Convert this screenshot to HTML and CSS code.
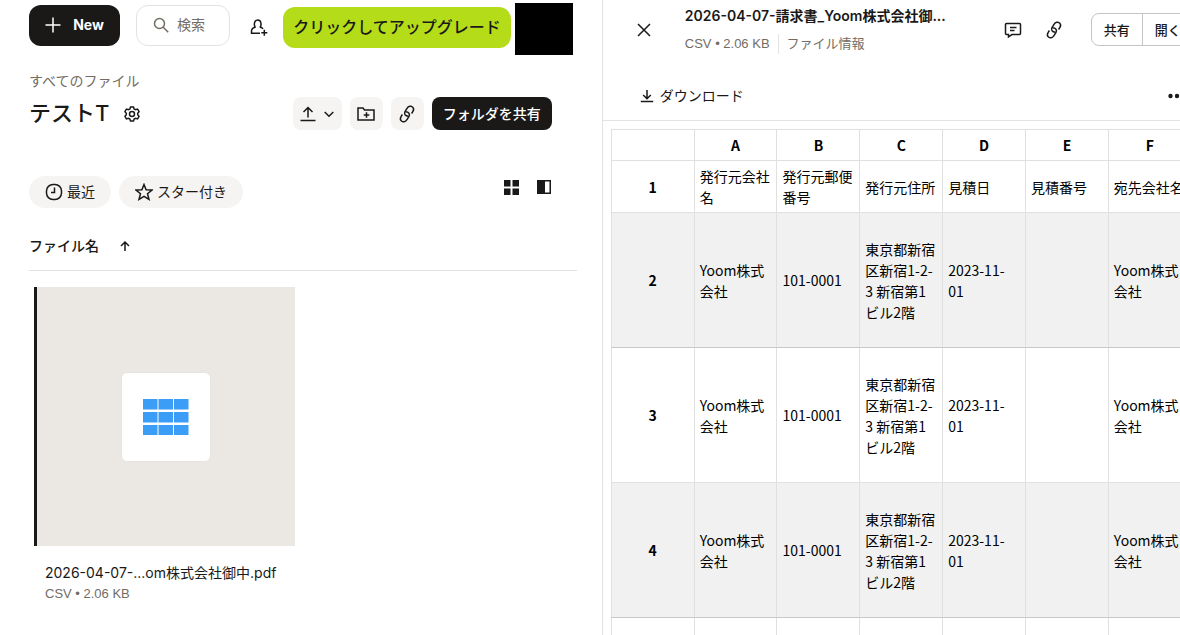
FILE: index.html
```html
<!DOCTYPE html>
<html lang="ja">
<head>
    <meta charset="UTF-8">
    <meta name="viewport" content="width=device-width, initial-scale=1.0">
    <title>テストT</title>
    <link rel="stylesheet" href="styles.css">
</head>
<body>
    <svg class="defs" aria-hidden="true">
        <symbol id="icon-link" viewBox="0 0 18 18">
            <path d="M10.200 11.200C7.500 11 5.600 9.300 7 6.600L9 3.400C10.500 1 13 .8 14.500 2 16 3.200 15.800 5 14.800 6.600L13.600 8.500M7.800 6.800C10.500 7 12.400 8.700 11 11.400L9 14.600C7.500 17 5 17.200 3.500 16 2 14.800 2.200 13 3.200 11.400L4.400 9.500"/>
        </symbol>
    </svg>

    <main class="browser">
        <div class="topbar">
            <button type="button" class="btn-new">
                <svg class="icon" width="16" height="16" viewBox="0 0 16 16"><path d="M8 .5v15M.5 8h15"/></svg>
                New
            </button>
            <label class="search">
                <svg class="icon" width="16" height="16" viewBox="0 0 16 16"><circle cx="6.500" cy="6.500" r="5"/><path d="M10.200 10.200l5 5"/></svg>
                <input type="text" placeholder="検索" aria-label="検索">
            </label>
            <button type="button" class="btn-plain btn-invite" aria-label="招待">
                <svg class="icon" width="18" height="18" viewBox="0 0 18 18"><path d="M10 15.300H1.500v-1.800c0-2.200 1.300-3.600 3.400-4.200M5.500 9.700C4.600 8.700 4.200 6.500 4.500 4.800 4.900 2.800 6.200 2 7.700 2s2.800.8 3.200 2.800c.3 1.700-.1 3.900-1 4.900M10.500 9.300c1.100.3 2 .8 2.600 1.500M14.300 11.800v6M11.300 14.800h6"/></svg>
            </button>
            <button type="button" class="btn-upgrade">クリックしてアップグレード</button>
            <div class="avatar"></div>
        </div>

        <a href="#" class="breadcrumb">すべてのファイル</a>

        <div class="title-row">
            <h1>テストT</h1>
            <button type="button" class="btn-plain" aria-label="設定">
                <svg class="icon" width="16" height="16" viewBox="0 0 16 16"><path d="M6.500 1h3l.6 1.900 1.500.8 2-.6 1.500 2.600L13.700 7.200v1.600l1.400 1.500-1.500 2.600-2-.6-1.500.8-.6 1.900h-3l-.6-1.900-1.500-.8-2 .6L.9 10.300l1.400-1.500V7.200L.9 5.700l1.500-2.600 2 .6 1.500-.8z"/><circle cx="8" cy="8" r="2.500"/></svg>
            </button>
            <div class="actions">
                <button type="button" class="btn-soft btn-upload" aria-label="アップロード">
                    <svg class="icon" width="16" height="16" viewBox="0 0 16 16"><path d="M8 11.500V1.500M3.500 6L8 1.500 12.500 6M.5 14.500h15"/></svg>
                    <svg class="icon" width="10" height="10" viewBox="0 0 10 10"><path d="M.7 3L5 7.200 9.300 3"/></svg>
                </button>
                <button type="button" class="btn-soft" aria-label="新しいフォルダ">
                    <svg class="icon" width="18" height="18" viewBox="0 0 18 18"><path d="M1 15V3h5l1.500 2H17v10zM9.500 7.200v5.600M6.700 10h5.600"/></svg>
                </button>
                <button type="button" class="btn-soft" aria-label="リンクをコピー">
                    <svg class="icon" width="18" height="18"><use href="#icon-link"/></svg>
                </button>
                <button type="button" class="btn-share">フォルダを共有</button>
            </div>
        </div>

        <div class="filters">
            <button type="button" class="chip">
                <svg class="icon" width="18" height="18" viewBox="0 0 18 18"><rect x="1.500" y="1.500" width="15" height="15" rx="6.500"/><path d="M9.500 4.500v5H6"/></svg>
                最近
            </button>
            <button type="button" class="chip">
                <svg class="icon" width="18" height="18" viewBox="0 0 18 18"><path d="M9 1.500l2.100 5.200 5.900.3-4.500 3.700 1.500 5.700L9 13.300l-5 3.100 1.500-5.700L1 7l5.900-.3z"/></svg>
                スター付き
            </button>
            <div class="views">
                <button type="button" class="btn-plain" aria-label="グリッド表示">
                    <svg class="solid" width="15" height="15" viewBox="0 0 15 15"><path d="M0 0h6.500v6.500H0zM8.500 0H15v6.500H8.500zM0 8.500h6.500V15H0zM8.500 8.500H15V15H8.500z"/></svg>
                </button>
                <button type="button" class="btn-plain" aria-label="プレビュー表示">
                    <svg class="solid" width="14" height="14" viewBox="0 0 14 14"><path fill-rule="evenodd" d="M0 0h14v14H0zM8 1.500v11h4.500v-11z"/></svg>
                </button>
            </div>
        </div>

        <button type="button" class="sort">
            ファイル名
            <svg class="icon" width="12" height="12" viewBox="0 0 12 12"><path d="M6 11V2M2 6l4-4 4 4"/></svg>
        </button>

        <div class="files">
            <article class="file">
                <div class="thumb">
                    <div class="thumb-card">
                        <svg class="sheet-icon" width="46" height="36" viewBox="0 0 46 36"><path d="M0 0h14.500v10.500H0zM15.500 0H30v10.500H15.500zM31 0h14.500v10.500H31zM0 13h14.500v10.500H0zM15.500 13H30v10.500H15.500zM31 13h14.500v10.500H31zM0 26h14.500v10H0zM15.500 26H30v10H15.500zM31 26h14.500v10H31z"/></svg>
                    </div>
                </div>
                <p class="file-name">2026-04-07-...om株式会社御中.pdf</p>
                <p class="file-meta">CSV • 2.06 KB</p>
            </article>
        </div>
    </main>

    <section class="preview">
        <header class="preview-header">
            <button type="button" class="btn-plain btn-close" aria-label="閉じる">
                <svg class="icon" width="14" height="14" viewBox="0 0 14 14"><path d="M1 1l12 12M13 1L1 13"/></svg>
            </button>
            <div class="preview-title">
                <h2>2026-04-07-請求書_Yoom株式会社御...</h2>
                <p class="preview-meta"><span>CSV • 2.06 KB</span><a href="#">ファイル情報</a></p>
            </div>
            <button type="button" class="btn-plain" aria-label="コメント">
                <svg class="icon" width="18" height="18" viewBox="0 0 18 18"><path d="M2.500 2.500h13a1 1 0 0 1 1 1v9a1 1 0 0 1-1 1H8L4.500 15.800v-2.300h-2a1 1 0 0 1-1-1v-9a1 1 0 0 1 1-1zM6 6.500h6.500M6 9.500h4.500"/></svg>
            </button>
            <button type="button" class="btn-plain btn-link" aria-label="リンクをコピー">
                <svg class="icon" width="18" height="18"><use href="#icon-link"/></svg>
            </button>
            <div class="btn-group">
                <button type="button">共有</button>
                <button type="button">開く</button>
            </div>
        </header>

        <div class="toolbar">
            <button type="button" class="btn-plain btn-download">
                <svg class="icon" width="14" height="14" viewBox="0 0 14 14"><path d="M7 1v8.500M3.200 6L7 9.700 10.800 6M.8 12.500h12.400"/></svg>
                ダウンロード
            </button>
            <button type="button" class="btn-plain btn-more" aria-label="その他">
                <svg class="solid" width="18" height="6" viewBox="0 0 18 6"><circle cx="2.500" cy="3" r="2.200"/><circle cx="9" cy="3" r="2.200"/><circle cx="15.500" cy="3" r="2.200"/></svg>
            </button>
        </div>

        <div class="sheet">
            <table>
                <thead>
                    <tr><th></th><th>A</th><th>B</th><th>C</th><th>D</th><th>E</th><th>F</th></tr>
                </thead>
                <tbody>
                    <tr class="labels">
                        <th>1</th>
                        <td>発行元会社名</td>
                        <td>発行元郵便番号</td>
                        <td>発行元住所</td>
                        <td>見積日</td>
                        <td>見積番号</td>
                        <td>宛先会社名</td>
                    </tr>
                    <tr>
                        <th>2</th>
                        <td>Yoom株式会社</td>
                        <td>101-0001</td>
                        <td>東京都新宿区新宿1-2-3 新宿第1ビル2階</td>
                        <td>2023-11-01</td>
                        <td></td>
                        <td>Yoom株式会社</td>
                    </tr>
                    <tr>
                        <th>3</th>
                        <td>Yoom株式会社</td>
                        <td>101-0001</td>
                        <td>東京都新宿区新宿1-2-3 新宿第1ビル2階</td>
                        <td>2023-11-01</td>
                        <td></td>
                        <td>Yoom株式会社</td>
                    </tr>
                    <tr>
                        <th>4</th>
                        <td>Yoom株式会社</td>
                        <td>101-0001</td>
                        <td>東京都新宿区新宿1-2-3 新宿第1ビル2階</td>
                        <td>2023-11-01</td>
                        <td></td>
                        <td>Yoom株式会社</td>
                    </tr>
                    <tr>
                        <th></th><td></td><td></td><td></td><td></td><td></td><td></td>
                    </tr>
                </tbody>
            </table>
        </div>
    </section>
</body>
</html>
```
FILE: styles.css
```css
:root {
    --ink: #1a1918;
    --muted: #736c64;
    --soft: #f5f4f2;
    --line: #e2e2e1;
    --accent: #b4dc19;
}

* {
    box-sizing: border-box;
    margin: 0;
    padding: 0;
}

body {
    display: flex;
    height: 100vh;
    overflow: hidden;
    background: #fff;
    color: var(--ink);
    font: 14px/20px Inter, "Noto Sans CJK JP", sans-serif;
}

button,
input {
    font: inherit;
    color: inherit;
    border: none;
    background: none;
    white-space: nowrap;
}

button {
    display: flex;
    flex-shrink: 0;
    align-items: center;
    justify-content: center;
    cursor: pointer;
}

a {
    color: inherit;
    text-decoration: none;
}

.defs {
    position: absolute;
    width: 0;
    height: 0;
}

.icon {
    flex-shrink: 0;
    fill: none;
    stroke: currentColor;
    stroke-width: 1.5;
}

.solid {
    fill: currentColor;
}

/* File list */
.browser {
    flex: 0 0 51%;
    padding: 3px 25px 0 29px;
    overflow: hidden;
}

.topbar {
    display: flex;
    align-items: center;
    height: 52px;
}

.btn-new {
    gap: 12px;
    width: 91px;
    height: 41px;
    margin: 0 16px 8px 0;
    border-radius: 12px;
    background: var(--ink);
    color: #fff;
    font-weight: 700;
}

.search {
    display: flex;
    flex: 0 0 94px;
    align-items: center;
    gap: 8px;
    height: 41px;
    margin: 0 20px 8px 0;
    padding: 0 8px 0 16px;
    border: 1px solid var(--line);
    border-radius: 12px;
    color: var(--muted);
}

.search input {
    width: 100%;
    min-width: 0;
    outline: none;
}

.search input::placeholder {
    color: var(--muted);
}

.btn-invite {
    padding-bottom: 4px;
}

.btn-upgrade {
    width: 228px;
    height: 41px;
    margin: 0 4px 4px 15px;
    border-radius: 12px;
    background: var(--accent);
    font-size: 16px;
    font-weight: 500;
}

.avatar {
    flex: 0 0 58px;
    height: 52px;
    background: #000;
}

.breadcrumb {
    display: block;
    margin-top: 16px;
    color: var(--muted);
}

.title-row {
    display: flex;
    align-items: center;
    gap: 15px;
    margin-top: 6px;
    padding-right: 25px;
}

h1 {
    font-size: 22px;
    font-weight: 500;
    line-height: 33px;
}

.actions {
    display: flex;
    gap: 8px;
    margin-left: auto;
}

.btn-soft {
    width: 33px;
    height: 33px;
    border-radius: 8px;
    background: var(--soft);
}

.btn-upload {
    gap: 8px;
    width: 49px;
}

.btn-share {
    width: 120px;
    height: 33px;
    border-radius: 8px;
    background: var(--ink);
    color: #fff;
    font-weight: 500;
}

.filters {
    display: flex;
    align-items: center;
    gap: 8px;
    margin-top: 46px;
}

.chip {
    gap: 4px;
    height: 32px;
    padding: 0 16px;
    border-radius: 16px;
    background: var(--soft);
}

.views {
    display: flex;
    gap: 18px;
    margin: 0 26px 10px auto;
}

.sort {
    justify-content: flex-start;
    gap: 20px;
    width: 100%;
    height: 63px;
    padding-top: 14px;
    border-bottom: 1px solid var(--line);
    font-weight: 500;
}

.files {
    display: grid;
    grid-template-columns: repeat(2, 1fr);
    gap: 16px;
    padding: 16px 5px;
}

.thumb {
    display: flex;
    align-items: center;
    justify-content: center;
    height: 259px;
    border-left: 3px solid var(--ink);
    background: #ebe8e3;
}

.thumb-card {
    display: flex;
    align-items: center;
    justify-content: center;
    width: 90px;
    height: 90px;
    border: 1px solid #e6e4e1;
    border-radius: 6px;
    background: #fff;
}

.sheet-icon {
    fill: #3b9df5;
}

.file-name {
    margin: 17px 0 1px 11px;
    white-space: nowrap;
}

.file-meta {
    margin-left: 11px;
}

.file-meta,
.preview-meta {
    color: var(--muted);
    font-family: "Liberation Sans", "Noto Sans CJK JP", sans-serif;
    font-size: 13px;
}

/* Preview */
.preview {
    display: flex;
    flex: 1;
    flex-direction: column;
    min-width: 0;
    border-left: 1px solid var(--line);
    overflow: hidden;
}

.preview-header {
    display: flex;
    flex-shrink: 0;
    align-items: center;
    height: 59px;
    padding-left: 34px;
}

.btn-close {
    margin-right: 34px;
}

.preview-title {
    flex: 0 0 300px;
    margin-right: 19px;
}

h2 {
    margin-bottom: 8px;
    font-size: 14px;
    font-weight: 600;
    line-height: 20px;
    white-space: nowrap;
}

.preview-meta {
    display: flex;
}

.preview-meta a {
    margin-left: 8px;
    padding-left: 8px;
    border-left: 1px solid var(--line);
}

.btn-link {
    margin: 0 28px 0 23px;
}

.btn-group {
    display: flex;
    flex-shrink: 0;
    border: 1px solid #c6c4c1;
    border-radius: 8px;
}

.btn-group button {
    height: 31px;
    padding: 0 12px;
    font-size: 13px;
    font-weight: 500;
}

.btn-group button + button {
    border-left: 1px solid #c6c4c1;
}

.toolbar {
    display: flex;
    flex-shrink: 0;
    align-items: center;
    justify-content: space-between;
    height: 62px;
    padding: 12px 0 0 37px;
    border-bottom: 1px solid var(--line);
}

.btn-download {
    gap: 6px;
}

.btn-more {
    margin-right: -6px;
}

.sheet {
    flex: 1;
    padding: 8px 0 0 8px;
    overflow: auto;
    scrollbar-width: none;
}

table {
    width: 581px;
    table-layout: fixed;
    border-collapse: collapse;
    color: #000;
    font: 14px/21px "Noto Sans CJK JP", sans-serif;
}

th,
td {
    height: 135px;
    padding: 1px 5px 0;
    border: 1px solid #e0e0e0;
    text-align: left;
    vertical-align: middle;
}

th {
    font-weight: 700;
    text-align: center;
}

thead th {
    height: 31px;
}

.labels th,
.labels td {
    height: 52px;
}

tbody tr:nth-child(even) {
    background: #f1f1f1;
}

tbody tr:nth-child(even) th,
tbody tr:nth-child(even) td {
    border-bottom-color: #c8c8c8;
}
```
